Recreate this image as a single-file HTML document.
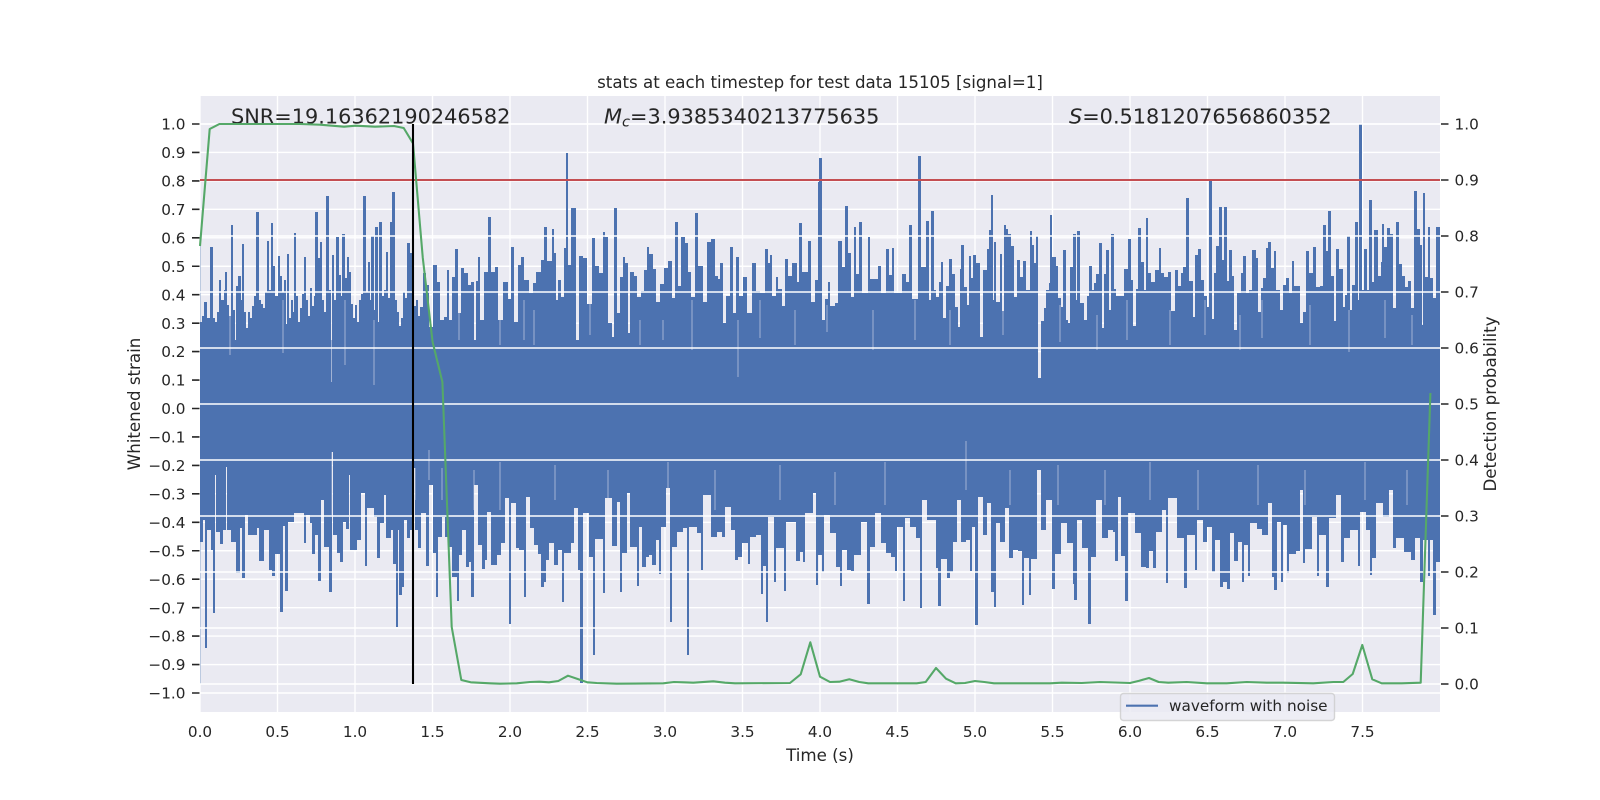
<!DOCTYPE html>
<html lang="en">
<head>
<meta charset="utf-8">
<title>stats at each timestep</title>
<style>
html,body{margin:0;padding:0;background:#fff;width:1600px;height:800px;overflow:hidden}
svg{display:block}
text{font-family:"DejaVu Sans","Liberation Sans",sans-serif;fill:#262626}
.t{font-size:15.28px}
</style>
</head>
<body>
<svg xmlns="http://www.w3.org/2000/svg" width="1600" height="800" viewBox="0 0 1600 800">
<rect width="1600" height="800" fill="#fff"/>
<rect x="200" y="96" width="1240" height="616" fill="#eaeaf2"/>
<!-- vertical + left horizontal grid -->
<g stroke="#fff" stroke-width="1.39" fill="none">
<path d="M200 96V712M277.5 96V712M355 96V712M432.5 96V712M510 96V712M587.5 96V712M665 96V712M742.5 96V712M820 96V712M897.5 96V712M975 96V712M1052.5 96V712M1130 96V712M1207.5 96V712M1285 96V712M1362.5 96V712"/>
<path d="M200 124H1440M200 152.45H1440M200 180.9H1440M200 209.35H1440M200 237.8H1440M200 266.25H1440M200 294.7H1440M200 323.15H1440M200 351.6H1440M200 380.05H1440M200 408.5H1440M200 436.95H1440M200 465.4H1440M200 493.85H1440M200 522.3H1440M200 550.75H1440M200 579.2H1440M200 607.65H1440M200 636.1H1440M200 664.55H1440M200 693H1440"/>
</g>
<!-- waveform -->
<path d="M200.5 246V684" stroke="#4c72b0" stroke-width="1" opacity=".35" fill="none"/>
<path fill="#4c72b0" d="M200 410V322H202V316H204V302H207V318H210V247H213V318H215V322H217V312H219V280H221V300H224V290H225V272H227V305H229V316H231V225H233V310H235V340H236V286H238V276H241V300H242V244H244V312H246V328H248V312H250V318H252V306H254V296H256V212H259V300H261V304H263V308H265V292H267V241H269V290H271V223H273V266H275V296H278V256H280V276H282V292H284V280H286V324H287V254H289V318H291V300H293V312H294V233H296V296H298V322H300V308H302V294H304V257H306V300H308V316H310V288H312V306H314V296H315V212H318V258H320V242H322V300H324V312H326V196H329V290H331V340H332V255H334V300H336V237H339V275H341V296H342V234H345V278H347V257H349V272H351V304H353V318H355V305H357V322H359V300H361V294H363V196H366V292H368V262H370V300H371V236H374V310H375V227H378V322H379V222H382V296H384V290H386V252H388V298H390V222H392V192H395V300H397V312H399V326H401V318H403V292H405V298H407V243H410V253H412V288H414V306H416V300H418V316H420V307H423V273H426V285H429V327H433V265H437V282H440V320H444V317H447V270H449V320H452V277H455V249H458V313H461V268H464V273H468V285H471V282H474V340H476V281H478V257H480V320H484V272H488V217H491V272H495V267H498V320H503V282H508V299H511V247H514V322H518V265H521V257H524V280H529V293H533V283H536V272H541V260H544V227H547V261H552V229H554V253H556V300H558V280H561V297H564V248H566V153H568V265H571V208H576V340H579V256H583V258H587V304H592V238H595V266H599V273H603V232H605V237H608V323H612V337H614V208H617V313H620V277H623V257H625V263H628V333H630V272H634V276H637V297H641V291H644V270H647V247H649V254H653V269H656V302H660V284H664V268H668V261H672V298H675V222H678V286H681V237H685V243H688V272H691V297H695V213H698V266H703V302H707V242H711V239H715V276H718V279H720V263H723V323H726V296H730V247H733V313H736V257H739V296H743V277H747V313H752V263H756V291H760V293H765V249H768V263H770V255H772V296H776V277H778V289H782V306H785V259H788V276H792V263H797V282H799V223H802V272H808V241H811V302H815V280H818V182H819V158H822V320H825V299H828V282H830V306H835V303H838V241H842V267H845V206H848V253H851V297H854V227H856V274H859V222H862V293H868V237H870V279H878V266H881V293H886V249H889V275H892V248H894V293H902V274H906V282H909V225H912V299H918V156H921V267H926V221H929V300H931V211H934V290H936V297H939V282H941V262H943V318H946V286H949V259H952V274H955V307H958V327H960V269H961V245H964V287H967V305H969V256H971V278H973V255H976V263H980V337H983V270H987V249H989V230H991V195H993V300H994V242H996V302H1000V254H1002V311H1004V225H1006V229H1008V234H1011V246H1014V297H1017V260H1020V277H1023V261H1026V290H1030V231H1032V245H1034V263H1036V236H1038V378H1041V321H1044V308H1046V290H1049V283H1050V215H1052V257H1056V266H1058V298H1061V307H1063V250H1066V320H1068V323H1070V267H1073V234H1076V300H1077V231H1080V303H1084V320H1087V296H1089V266H1092V290H1094V283H1096V274H1099V243H1102V328H1104V274H1106V250H1109V310H1111V234H1114V289H1116V296H1120V296H1124V269H1128V239H1131V280H1133V326H1136V289H1138V228H1141V262H1144V290H1146V218H1148V273H1151V282H1155V270H1159V248H1161V273H1164V277H1168V272H1171V311H1175V270H1178V286H1181V273H1183V267H1186V198H1189V281H1193V317H1195V255H1198V249H1201V280H1204V296H1207V307H1209V181H1212V319H1214V273H1216V246H1219V207H1222V260H1224V207H1227V281H1229V250H1232V276H1234V330H1237V293H1241V273H1243V256H1246V293H1249V290H1252V250H1256V258H1258V312H1261V288H1263V278H1266V248H1268V242H1271V268H1274V251H1276V290H1280V310H1283V285H1286V278H1289V293H1292V261H1294V286H1298V286H1300V323H1303V312H1306V251H1309V273H1313V247H1316V287H1320V286H1323V225H1326V251H1328V211H1331V276H1334V321H1336V249H1339V269H1343V307H1345V295H1347V236H1350V310H1352V285H1355V222H1358V300H1359V124H1362V290H1364V249H1367V290H1369V200H1372V282H1374V230H1378V276H1381V262H1382V224H1384V247H1387V228H1390V234H1393V308H1396V222H1399V264H1402V276H1405V287H1408V281H1411V308H1414V191H1417V229H1420V245H1422V325H1423V193H1425V277H1428V227H1430V278H1433V298H1436V227H1440V410Z"/>
<path fill="#4c72b0" d="M200 400V542H203V520H205V648H207V530H211V550H213V613H215V475H216V532H220V544H223V530H226V467H227V530H231V542H236V573H240V528H242V578H245V515H248V535H252V535H257V528H259V561H264V530H269V570H272V576H275V554H280V612H283V526H285V591H288V522H294V513H304V543H306V515H310V523H312V554H315V535H318V581H321V500H324V547H329V592H332V452H333V535H337V553H340V562H343V522H346V529H349V475H350V550H357V540H361V493H365V566H367V508H374V517H377V558H380V523H384V495H386V538H391V530H393V564H396V627H398V530H399V595H402V587H404V520H407V538H410V530H414V468H415V530H418V548H421V513H426V566H429V485H433V553H436V597H438V537H442V517H445V537H449V547H452V577H457V601H459V555H462V530H466V567H469V562H471V597H474V485H478V545H482V569H485V560H487V512H491V565H497V555H501V543H505V498H509V624H511V503H516V548H519V550H524V597H526V497H530V528H534V545H538V554H541V587H544V582H546V560H549V543H554V565H558V550H562V602H564V553H571V543H574V508H578V570H580V683H583V513H589V557H593V655H595V539H603V593H605V498H612V546H617V502H620V592H622V553H627V493H630V547H637V586H639V527H642V567H646V557H649V555H652V565H656V540H659V574H661V527H666V488H670V622H672V547H677V532H683V528H687V655H689V527H697V533H701V570H703V495H711V537H717V532H722V537H725V507H731V530H735V560H738V557H742V543H748V564H750V537H756V535H761V594H763V566H766V622H768V517H774V582H776V548H784V591H786V522H796V561H800V552H803V562H805V513H813V493H816V585H818V555H822V572H824V515H830V533H836V567H840V586H842V550H847V570H851V571H854V555H861V522H867V604H870V547H875V513H881V543H886V553H891V557H895V571H897V527H903V601H905V518H910V527H916V538H920V608H922V500H927V520H936V568H938V606H941V559H947V578H950V572H953V542H957V500H961V542H966V540H970V571H972V527H975V625H978V497H983V535H987V503H991V592H994V607H996V523H1000V542H1005V508H1009V558H1013V550H1018V551H1022V605H1024V558H1029V595H1031V559H1037V470H1041V530H1046V500H1052V589H1055V554H1061V523H1067V543H1073V584H1074V600H1077V520H1082V548H1088V624H1091V557H1096V500H1102V538H1108V530H1113V532H1115V561H1118V497H1121V556H1125V601H1128V513H1135V533H1141V567H1146V568H1149V551H1153V568H1156V532H1162V510H1166V583H1168V498H1177V538H1184V588H1187V535H1195V570H1197V520H1203V542H1207V527H1212V572H1215V540H1220V587H1223V582H1227V589H1230V533H1234V561H1238V542H1242V582H1244V545H1248V576H1250V523H1257V529H1262V535H1268V503H1272V577H1274V590H1277V522H1281V582H1283V525H1287V573H1289V554H1296V551H1300V490H1303V563H1305V549H1312V517H1317V576H1319V535H1326V587H1329V518H1336V495H1341V562H1344V538H1350V530H1358V566H1360V512H1366V530H1370V575H1372V558H1376V503H1383V517H1389V490H1393V548H1396V538H1404V552H1411V560H1415V538H1420V582H1423V540H1428V576H1430V540H1433V615H1436V562H1440V400Z"/>
<path stroke="#eaeaf2" stroke-width="1" opacity=".55" fill="none" d="M230 300V355M283 300V353M331.5 320V382M345 300V365M374 320V385M459 310V340M500 320V345M524 300V340M534 310V345M590 300V335M640 320V345M663 320V340M692 300V350M738 320V377M760 300V338M795 310V345M827 305V332M873 310V350M915 300V340M950 310V345M1003 300V335M1060 305V342M1097 315V350M1127 300V340M1170 310V345M1205 300V335M1240 315V350M1262 300V338M1310 305V345M1349 310V352M1385 300V338M1412 315V345M332 452V515M429 450V480M500 462V510M415 468V500M442 468V500M474 470V510M555 465V500M608 470V505M668 462V500M715 470V510M780 465V500M835 472V505M885 462V505M966 441V490M1010 470V505M1058 465V505M1105 470V505M1150 462V500M1198 470V510M1258 465V505M1305 470V505M1365 462V500M1407 470V505"/>
<!-- right axis grid over waveform -->
<path d="M200 124H1440M200 180H1440M200 236H1440M200 292H1440M200 348H1440M200 404H1440M200 460H1440M200 516H1440M200 572H1440M200 628H1440M200 684H1440" stroke="#fff" stroke-width="1.39" fill="none"/>
<!-- annotations -->
<text x="231" y="123.5" font-size="20.83">SNR=19.16362190246582</text>
<text x="604" y="123.5" font-size="20.83"><tspan font-style="italic">M</tspan><tspan font-style="italic" font-size="14.6" dy="3">c</tspan><tspan dy="-3">=3.9385340213775635</tspan></text>
<text x="1069" y="123.5" font-size="20.83"><tspan font-style="italic">S</tspan>=0.5181207656860352</text>
<!-- lines -->
<path d="M200 180H1440" stroke="#c44e52" stroke-width="2.08" fill="none"/>
<polyline fill="none" stroke="#55a868" stroke-width="2.08" stroke-linejoin="round" points="200,246 209.7,129 219.4,124 300,124 320,124.7 344,126.7 355.7,125.7 375,126.7 394,126 403.7,128 413,143.3 422.8,258 432.6,342 442.4,382 451.7,627 461.3,680 470.7,682.3 490,683.3 500,683.7 516.7,683.3 530,682 539.3,681.7 549,682.3 558.3,681 568,675.7 577.7,679 587.3,682.3 596.7,683 616.7,683.7 663.3,683.3 674,682 683.3,682.3 693.3,682.7 713.3,681.3 725,682.7 735,683.3 790,683 800.7,674.3 810.3,642.3 820,676.7 830,682 839.3,681.7 849.3,679.3 859.3,682 868.3,683.3 916.7,683.3 925.7,682 936,668 946,678.7 955.7,683.3 965,683 975,681 984.3,682 994,683.3 1050,683.3 1061.7,682.7 1081.7,683 1100,682 1130,683 1139.3,680.7 1149,678 1158.7,682 1168.3,682.7 1186.7,682 1206.7,683.3 1226.7,683.3 1246.7,682 1266.7,682.7 1283.3,682.7 1313.3,683.3 1333.3,682 1343.3,682 1352.7,674 1362.3,645 1372.3,679.3 1381.7,683.3 1401.7,683.3 1420.7,682.7 1430.4,393"/>
<path d="M413 124V684" stroke="#000" stroke-width="2.08" fill="none"/>
<!-- ticks -->
<path stroke="#262626" stroke-width="1.6" fill="none" d="M192 124h7.5M192 152.45h7.5M192 180.9h7.5M192 209.35h7.5M192 237.8h7.5M192 266.25h7.5M192 294.7h7.5M192 323.15h7.5M192 351.6h7.5M192 380.05h7.5M192 408.5h7.5M192 436.95h7.5M192 465.4h7.5M192 493.85h7.5M192 522.3h7.5M192 550.75h7.5M192 579.2h7.5M192 607.65h7.5M192 636.1h7.5M192 664.55h7.5M192 693h7.5M1441 124h7.5M1441 180h7.5M1441 236h7.5M1441 292h7.5M1441 348h7.5M1441 404h7.5M1441 460h7.5M1441 516h7.5M1441 572h7.5M1441 628h7.5M1441 684h7.5"/>
<!-- left tick labels -->
<g text-anchor="end">
<text class="t" x="185.5" y="129.6">1.0</text>
<text class="t" x="185.5" y="158">0.9</text>
<text class="t" x="185.5" y="186.5">0.8</text>
<text class="t" x="185.5" y="215">0.7</text>
<text class="t" x="185.5" y="243.4">0.6</text>
<text class="t" x="185.5" y="271.9">0.5</text>
<text class="t" x="185.5" y="300.3">0.4</text>
<text class="t" x="185.5" y="328.8">0.3</text>
<text class="t" x="185.5" y="357.2">0.2</text>
<text class="t" x="185.5" y="385.7">0.1</text>
<text class="t" x="185.5" y="414.1">0.0</text>
<text class="t" x="185.5" y="442.6">−0.1</text>
<text class="t" x="185.5" y="471">−0.2</text>
<text class="t" x="185.5" y="499.5">−0.3</text>
<text class="t" x="185.5" y="527.9">−0.4</text>
<text class="t" x="185.5" y="556.4">−0.5</text>
<text class="t" x="185.5" y="584.8">−0.6</text>
<text class="t" x="185.5" y="613.3">−0.7</text>
<text class="t" x="185.5" y="641.7">−0.8</text>
<text class="t" x="185.5" y="670.2">−0.9</text>
<text class="t" x="185.5" y="698.6">−1.0</text>
</g>
<!-- right tick labels -->
<g>
<text class="t" x="1454.5" y="129.6">1.0</text>
<text class="t" x="1454.5" y="185.6">0.9</text>
<text class="t" x="1454.5" y="241.6">0.8</text>
<text class="t" x="1454.5" y="297.6">0.7</text>
<text class="t" x="1454.5" y="353.6">0.6</text>
<text class="t" x="1454.5" y="409.6">0.5</text>
<text class="t" x="1454.5" y="465.6">0.4</text>
<text class="t" x="1454.5" y="521.6">0.3</text>
<text class="t" x="1454.5" y="577.6">0.2</text>
<text class="t" x="1454.5" y="633.6">0.1</text>
<text class="t" x="1454.5" y="689.6">0.0</text>
</g>
<!-- x tick labels -->
<g text-anchor="middle">
<text class="t" x="200" y="737">0.0</text>
<text class="t" x="277.5" y="737">0.5</text>
<text class="t" x="355" y="737">1.0</text>
<text class="t" x="432.5" y="737">1.5</text>
<text class="t" x="510" y="737">2.0</text>
<text class="t" x="587.5" y="737">2.5</text>
<text class="t" x="665" y="737">3.0</text>
<text class="t" x="742.5" y="737">3.5</text>
<text class="t" x="820" y="737">4.0</text>
<text class="t" x="897.5" y="737">4.5</text>
<text class="t" x="975" y="737">5.0</text>
<text class="t" x="1052.5" y="737">5.5</text>
<text class="t" x="1130" y="737">6.0</text>
<text class="t" x="1207.5" y="737">6.5</text>
<text class="t" x="1285" y="737">7.0</text>
<text class="t" x="1362.5" y="737">7.5</text>
</g>
<!-- labels -->
<text x="820" y="88" font-size="16.67" text-anchor="middle">stats at each timestep for test data 15105 [signal=1]</text>
<text x="820" y="761" font-size="16.67" text-anchor="middle">Time (s)</text>
<text transform="translate(140 404) rotate(-90)" font-size="16.67" text-anchor="middle">Whitened strain</text>
<text transform="translate(1496 404) rotate(-90)" font-size="16.67" text-anchor="middle">Detection probability</text>
<!-- legend -->
<rect x="1120.5" y="693.5" width="214" height="27" rx="3" ry="3" fill="#eaeaf2" fill-opacity=".8" stroke="#cccccc" stroke-opacity=".8" stroke-width="1.39"/>
<path d="M1126 705.7H1158" stroke="#4c72b0" stroke-width="2.08" fill="none"/>
<text class="t" x="1169" y="711.2">waveform with noise</text>
</svg>
</body>
</html>
